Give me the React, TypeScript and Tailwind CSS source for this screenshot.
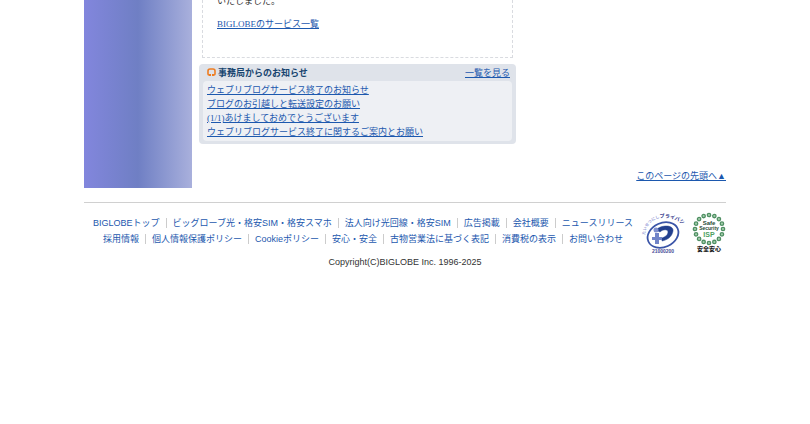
/* ------------------ TYPES & DATA ------------------ */
type LinkItem = {
  label: string;
  href: string;
};

const notices: LinkItem[] = [
  { label: "ウェブリブログサービス終了のお知らせ", href: "#notice-close" },
  { label: "ブログのお引越しと転送設定のお願い", href: "#notice-move" },
  { label: "(1/1)あけましておめでとうございます", href: "#notice-newyear" },
  { label: "ウェブリブログサービス終了に関するご案内とお願い", href: "#notice-guide" },
];

const footerRows: LinkItem[][] = [
  [
    { label: "BIGLOBEトップ", href: "#top" },
    { label: "ビッグローブ光・格安SIM・格安スマホ", href: "#hikari" },
    { label: "法人向け光回線・格安SIM", href: "#business" },
    { label: "広告掲載", href: "#ads" },
    { label: "会社概要", href: "#company" },
    { label: "ニュースリリース", href: "#news" },
  ],
  [
    { label: "採用情報", href: "#recruit" },
    { label: "個人情報保護ポリシー", href: "#privacy" },
    { label: "Cookieポリシー", href: "#cookie" },
    { label: "安心・安全", href: "#safety" },
    { label: "古物営業法に基づく表記", href: "#kobutsu" },
    { label: "消費税の表示", href: "#tax" },
    { label: "お問い合わせ", href: "#contact" },
  ],
];

/* ------------------ LOGOS ------------------ */
function PrivacyMark() {
  return (
    <svg
      width="42"
      height="43"
      viewBox="0 0 42 43"
      className="overflow-visible"
      aria-label="プライバシーマーク"
    >
      <defs>
        <path id="pm-arc" d="M3 23 C4 6 26 -3 48 18" />
      </defs>
      <text fontWeight="bold">
        <textPath href="#pm-arc">
          <tspan fontSize="4" fill="#9a9fd8">たいせつにし</tspan>
          <tspan fontSize="5" fill="#2b2f86">プライバシ</tspan>
        </textPath>
      </text>
      <ellipse
        cx="21"
        cy="23"
        rx="16"
        ry="12"
        fill="#fff"
        stroke="#3b55a8"
        strokeWidth="1.8"
        transform="rotate(-24 21 23)"
      />
      <path
        d="M14 18 C18 13 32 12 31 19 C30 25 25 28 20 29 L20 26 C23 25 26 23 26 20 C26 17 21 17 18 20 Z"
        fill="#23408f"
        stroke="#23408f"
        strokeWidth="0.5"
      />
      <circle cx="14" cy="18" r="2.5" fill="#7f8fce" />
      <path d="M13 21 H17 V32 H13 Z M10 25 H20 V28 H10 Z" fill="#7184c8" />
      <text x="21" y="41" fontSize="5" fontWeight="bold" fill="#4a4d98" textAnchor="middle">
        21000200
      </text>
    </svg>
  );
}

function SafeSecurityMark() {
  const beads = Array.from({ length: 16 }, (_, i) => (i * Math.PI * 2) / 16);

  return (
    <svg width="34" height="42" viewBox="0 0 34 42" aria-label="安全安心マーク">
      {beads.map((a) => (
        <circle
          key={a}
          cx={17 + 14 * Math.cos(a)}
          cy={17 + 14 * Math.sin(a)}
          r="1.7"
          fill="#a5cfad"
          stroke="#4f8f63"
          strokeWidth="1.3"
        />
      ))}
      <g fontWeight="bold" textAnchor="middle" fill="#1f4a35">
        <text x="17" y="13" fontSize="6">Safe</text>
        <text x="17" y="18" fontSize="5">Security</text>
        <text x="17" y="25" fontSize="7" fill="#4d9f60">ISP</text>
      </g>
      <text x="17" y="39" fontSize="6" fontWeight="900" fill="#222" textAnchor="middle">
        安全安心
      </text>
    </svg>
  );
}

/* ------------------ SECTIONS ------------------ */
function NoticeBox() {
  return (
    <section className="w-[317px] rounded bg-[#dfe3ea] px-1 pb-[3px]">
      <div className="flex h-[17px] items-center justify-between pr-[2px] pl-1">
        <h2 className="flex items-center gap-[2px] font-bold text-[#17446f]">
          <svg width="9" height="9" viewBox="0 0 9 9" aria-hidden="true">
            <path
              d="M3 7 H2 Q1 7 1 6 V3 Q1 1 3 1 H6 Q8 1 8 3 V6 Q8 7 7 7 H6"
              fill="none"
              stroke="#ee7d22"
              strokeWidth="1.6"
            />
            <path d="M2 6 H4 V8 H2 Z M5 6 H7 V8 H5 Z" fill="#ee7d22" />
          </svg>
          事務局からのお知らせ
        </h2>
        <a href="#notices" className="text-[#1c58ae] underline">
          一覧を見る
        </a>
      </div>
      <ul className="rounded-sm bg-[#eef0f4] px-1 py-[2px]">
        {notices.map((notice) => (
          <li key={notice.href}>
            <a href={notice.href} className="text-[#1c58ae] underline">
              {notice.label}
            </a>
          </li>
        ))}
      </ul>
    </section>
  );
}

function Footer() {
  return (
    <footer className="mt-[14px] border-t border-[#d0d0d0] font-['Liberation_Sans','Noto_Sans_CJK_JP',sans-serif]">
      <div className="flex justify-between pt-[9px]">
        <nav className="flex grow flex-col items-center gap-[2px] pt-1">
          {footerRows.map((row, i) => (
            <ul key={i} className="flex whitespace-nowrap">
              {row.map((item) => (
                <li
                  key={item.href}
                  className="flex items-center before:mx-[6px] before:h-[10px] before:w-px before:bg-[#cccccc] first:before:hidden"
                >
                  <a href={item.href} className="text-[#1c58ae]">
                    {item.label}
                  </a>
                </li>
              ))}
            </ul>
          ))}
        </nav>
        <div className="flex shrink-0 gap-2">
          <PrivacyMark />
          <SafeSecurityMark />
        </div>
      </div>
      <p className="text-center text-[#333333]">Copyright(C)BIGLOBE Inc. 1996-2025</p>
    </footer>
  );
}

export default function App() {
  return (
    <div className="min-h-screen bg-white font-['Liberation_Serif','Noto_Sans_CJK_JP',serif] text-[9px] leading-[14px] text-[#333333]">
      <div className="mx-auto max-w-[642px]">
        <main className="flex">
          <aside className="h-[188px] w-[108px] shrink-0 bg-linear-to-r from-[#8286dd] via-[#6f7fc4] to-[#a9b0dc]" />
          <div className="flex grow flex-col pl-[7px]">
            <div className="ml-[3px] h-[58px] w-[311px] overflow-hidden border border-t-0 border-dashed border-[#d9dbe0] px-[14px]">
              <p className="-mt-[6px]">いたしました。</p>
              <p className="mt-[9px]">
                <a href="#services" className="text-[#1c58ae] underline">
                  BIGLOBEのサービス一覧
                </a>
              </p>
            </div>
            <div className="mt-[6px]">
              <NoticeBox />
            </div>
            <p className="mt-auto pb-[5px] text-right">
              <a href="#top" className="text-[#1c58ae] underline">
                このページの先頭へ▲
              </a>
            </p>
          </div>
        </main>
        <Footer />
      </div>
    </div>
  );
}
